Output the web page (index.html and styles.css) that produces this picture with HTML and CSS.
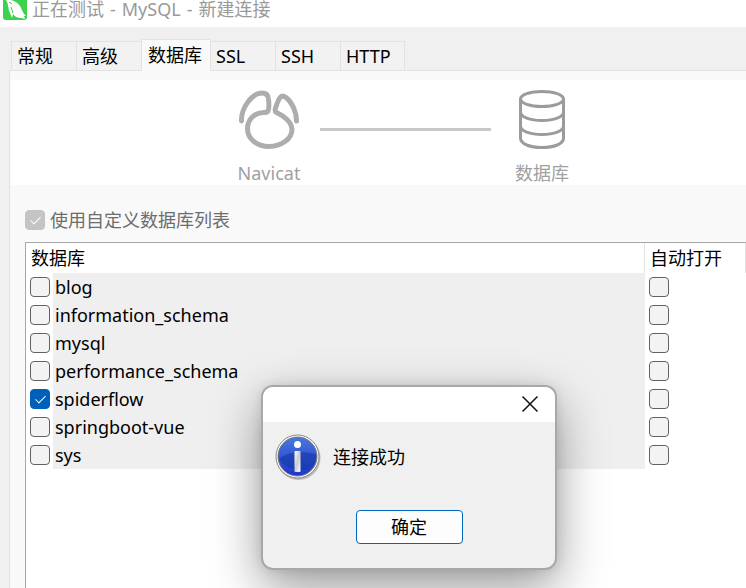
FILE: index.html
```html
<!DOCTYPE html>
<html lang="zh-CN">
<head>
    <meta charset="utf-8">
    <title>正在测试 - MySQL - 新建连接</title>
    <link rel="stylesheet" href="styles.css">
</head>
<body>
<header class="titlebar">
    <svg class="app-icon" viewBox="0 0 24 20" aria-hidden="true">
        <path fill="#3bd34b" d="M0 0H24V17Q24 20 21 20H3Q0 20 0 17Z" />
        <path fill="#fff" d="M3 0H8C12 1 15 3 17 6C19 9 19 12 23 16L21 16L22 19L18 18C15 18 12 17 10 14L9 18L6.500 12C5 9 6 5 3 0Z" />
        <path fill="none" stroke="#3bd34b" d="M6 2L9 4M8 7L10 13" />
    </svg>
    <h1>
        <span>正在测试</span>
        <span>-</span>
        <span>MySQL</span>
        <span>-</span>
        <span>新建连接</span>
    </h1>
</header>
<main class="window">
    <div class="tabs" role="tablist">
        <button type="button" role="tab" class="tab">常规</button>
        <button type="button" role="tab" class="tab">高级</button>
        <button type="button" role="tab" class="tab active" aria-selected="true">数据库</button>
        <button type="button" role="tab" class="tab">SSL</button>
        <button type="button" role="tab" class="tab">SSH</button>
        <button type="button" role="tab" class="tab">HTTP</button>
    </div>
    <section class="panel">
        <div class="banner">
            <div class="node">
                <svg width="62" height="60" viewBox="0 0 62 60" fill="none" stroke="#adadad"
                     stroke-width="5" stroke-linecap="round" stroke-linejoin="round" aria-hidden="true">
                    <path d="M3.500 31C3 18 14 3 24 3Q30 3 30.500 9Q31.500 18 30 21Q29 22.500 26 22.500C16 22.500 9.500 30 9.500 38.500C9.500 49 19 56.500 31 56.500C43 56.500 54 49 54 39.500C54 32 45 25.500 38.500 22.500Q36.500 21.500 37.500 18Q40 10 42.500 7Q44.500 5 48 7.500C54 12 58.500 22 58.500 31" />
                </svg>
                <span>Navicat</span>
            </div>
            <div class="link"></div>
            <div class="node">
                <svg width="46" height="60" viewBox="0 0 46 60" fill="none" stroke="#9b9b9b"
                     stroke-width="3" aria-hidden="true">
                    <ellipse cx="23" cy="9" rx="21.500" ry="7.500" />
                    <path d="M1.500 9V48C1.500 54 11 57.500 23 57.500S44.500 54 44.500 48V9M1.500 22C1.500 27 11 30.500 23 30.500S44.500 27 44.500 22M1.500 36C1.500 41 11 44.500 23 44.500S44.500 41 44.500 36" />
                </svg>
                <span>数据库</span>
            </div>
        </div>
        <label class="custom">
            <input type="checkbox" class="check" checked disabled>
            使用自定义数据库列表
        </label>
        <div class="list">
            <table>
                <thead>
                    <tr><th colspan="2">数据库</th><th class="auto">自动打开</th></tr>
                </thead>
                <tbody>
                    <tr>
                        <td class="pick"><input type="checkbox" class="check" id="db1"></td>
                        <td class="name"><label for="db1">blog</label></td>
                        <td class="auto"><input type="checkbox" class="check" aria-label="自动打开 blog"></td>
                    </tr>
                    <tr>
                        <td class="pick"><input type="checkbox" class="check" id="db2"></td>
                        <td class="name"><label for="db2">information_schema</label></td>
                        <td class="auto"><input type="checkbox" class="check" aria-label="自动打开 information_schema"></td>
                    </tr>
                    <tr>
                        <td class="pick"><input type="checkbox" class="check" id="db3"></td>
                        <td class="name"><label for="db3">mysql</label></td>
                        <td class="auto"><input type="checkbox" class="check" aria-label="自动打开 mysql"></td>
                    </tr>
                    <tr>
                        <td class="pick"><input type="checkbox" class="check" id="db4"></td>
                        <td class="name"><label for="db4">performance_schema</label></td>
                        <td class="auto"><input type="checkbox" class="check" aria-label="自动打开 performance_schema"></td>
                    </tr>
                    <tr>
                        <td class="pick"><input type="checkbox" class="check" id="db5" checked></td>
                        <td class="name"><label for="db5">spiderflow</label></td>
                        <td class="auto"><input type="checkbox" class="check" aria-label="自动打开 spiderflow"></td>
                    </tr>
                    <tr>
                        <td class="pick"><input type="checkbox" class="check" id="db6"></td>
                        <td class="name"><label for="db6">springboot-vue</label></td>
                        <td class="auto"><input type="checkbox" class="check" aria-label="自动打开 springboot-vue"></td>
                    </tr>
                    <tr>
                        <td class="pick"><input type="checkbox" class="check" id="db7"></td>
                        <td class="name"><label for="db7">sys</label></td>
                        <td class="auto"><input type="checkbox" class="check" aria-label="自动打开 sys"></td>
                    </tr>
                </tbody>
            </table>
        </div>
    </section>
</main>
<div class="dialog" role="alertdialog" aria-labelledby="message">
    <div class="dialog-title">
        <button type="button" class="close" aria-label="关闭">
            <svg width="16" height="16" viewBox="0 0 16 16" stroke="#111" stroke-width="1.500">
                <path d="M0.500 0.500L15.500 15.500M15.500 0.500L0.500 15.500" />
            </svg>
        </button>
    </div>
    <div class="dialog-body">
        <svg width="46" height="46" viewBox="0 0 46 46" aria-hidden="true">
            <defs>
                <linearGradient id="ball" x1="0" y1="0" x2="0" y2="1">
                    <stop offset="0" stop-color="#4a78dc" />
                    <stop offset="1" stop-color="#1d35d0" />
                </linearGradient>
                <linearGradient id="stem" x1="0" y1="0" x2="1" y2="1">
                    <stop offset="0" stop-color="#fff" />
                    <stop offset="0.500" stop-color="#ccc" />
                    <stop offset="1" stop-color="#fff" />
                </linearGradient>
            </defs>
            <circle cx="23.500" cy="24" r="22" fill="#bbb" />
            <circle cx="22.500" cy="22.500" r="21.500" fill="#fff" stroke="#888" />
            <circle cx="22.500" cy="22.500" r="19.500" fill="url(#ball)" stroke="#777" />
            <path fill="#1438a4" opacity="0.600" d="M4 25C12 18 26 16 41 20C42 30 36 36 29 36C17 36 9 33 4 25Z" />
            <circle cx="22.500" cy="10.500" r="3.500" fill="#fff" />
            <rect x="19.500" y="17" width="6" height="21" rx="1" fill="url(#stem)" />
        </svg>
        <p id="message">连接成功</p>
    </div>
    <div class="dialog-buttons">
        <button type="button" class="ok">确定</button>
    </div>
</div>
</body>
</html>
```

FILE: styles.css
```css
* {
    box-sizing: border-box;
}
body {
    display: flex;
    flex-direction: column;
    min-height: 100vh;
    margin: 0;
    background: #f0f0f0;
    color: #000;
    font-family: "Noto Sans", "Noto Sans CJK SC", sans-serif;
    font-size: 18px;
    line-height: 24px;
}
button {
    font: inherit;
    color: inherit;
}
.titlebar {
    display: flex;
    gap: 5px;
    height: 27px;
    padding-left: 3px;
    background: #fff;
}
.titlebar h1 {
    display: flex;
    gap: 6px;
    margin: 0;
    font-size: 18px;
    font-weight: normal;
    line-height: 18px;
    color: #999;
}
.app-icon {
    width: 24px;
    height: 20px;
}
.window {
    display: flex;
    flex: 1;
    flex-direction: column;
    padding: 12px 0 0 9px;
}
.tabs {
    display: flex;
    align-items: flex-end;
    padding-left: 2px;
}
.tab {
    width: 65px;
    height: 29px;
    padding: 0 0 0 5px;
    border: 1px solid #e2e2e2;
    border-width: 1px 0 0 1px;
    background: #f2f2f2;
    text-align: left;
}
.tab:last-child {
    border-right-width: 1px;
}
/* the open tab covers the panel's top line */
.tab.active {
    width: 69px;
    height: 32px;
    margin-bottom: -1px;
    padding: 0 0 2px 6px;
    background: #f9f9f9;
    z-index: 1;
}
.panel {
    display: flex;
    flex: 1;
    flex-direction: column;
    border: 1px solid #e2e2e2;
    border-width: 1px 0 0 1px;
    background: #f9f9f9;
}
.banner {
    display: flex;
    margin: 9px 0 0 1px;
    padding: 10px 0 0 207px;
    background: #fff;
    color: #a0a0a0;
}
.node {
    display: flex;
    flex-direction: column;
    align-items: center;
    gap: 11px;
    width: 102px;
}
.link {
    width: 171px;
    height: 3px;
    margin-top: 38px;
    background: #c8c8c8;
}
.custom {
    display: flex;
    align-items: center;
    gap: 5px;
    padding: 23px 0 10px 15px;
    color: #6d6d6d;
}
.check {
    display: block;
    flex: none;
    appearance: none;
    width: 20px;
    height: 20px;
    margin: 0;
    border: 1px solid #626262;
    border-radius: 4px;
    background: #f3f3f3;
}
.check:checked {
    border-color: #005fb8;
    background: #005fb8;
}
.check:disabled {
    border-color: #c4c4c4;
    background: #c4c4c4;
}
.check:checked::after {
    content: "";
    display: block;
    width: 10px;
    height: 5px;
    margin: 5px 4px;
    border: solid #fff;
    border-width: 0 0 1px 1px;
    transform: rotate(-45deg) scale(0.900);
}
.list {
    flex: 1;
    margin-left: 15px;
    border: 1px solid #a6a6a6;
    border-width: 1px 0 0 1px;
    background: #fff;
}
table {
    width: 100%;
    border-spacing: 0;
}
th {
    height: 30px;
    padding: 0 5px;
    border-right: 1px solid #e2e2e2;
    font-weight: normal;
    text-align: left;
}
td {
    height: 28px;
    padding: 0;
}
td.pick {
    width: 27px;
    padding-left: 4px;
}
td.name {
    padding-left: 2px;
    background: #efefef;
}
td.name label {
    display: block;
}
.auto {
    width: 101px;
}
td.auto {
    padding-left: 4px;
}
.dialog {
    position: absolute;
    top: 385px;
    left: 261px;
    width: 296px;
    border: 2px solid #a8a8a8;
    border-radius: 12px;
    background: #f0f0f0;
    box-shadow: 0 18px 50px rgba(0, 0, 0, 0.400), 0 0 12px rgba(0, 0, 0, 0.100);
}
.dialog-title {
    display: flex;
    justify-content: flex-end;
    padding: 3px 13px 5px;
    border-radius: 10px 10px 0 0;
    background: #fff;
}
.close {
    display: flex;
    align-items: center;
    justify-content: center;
    width: 24px;
    height: 27px;
    padding: 0;
    border: 0;
    background: none;
}
.dialog-body {
    display: flex;
    align-items: center;
    gap: 12px;
    padding: 12px 12px 0;
}
.dialog-body p {
    margin: 0;
}
.dialog-buttons {
    display: flex;
    justify-content: center;
    padding: 30px 0 24px;
}
.ok {
    width: 107px;
    height: 34px;
    padding: 0;
    border: 1px solid #0067c0;
    border-radius: 4px;
    background: #fdfdfd;
}
```
